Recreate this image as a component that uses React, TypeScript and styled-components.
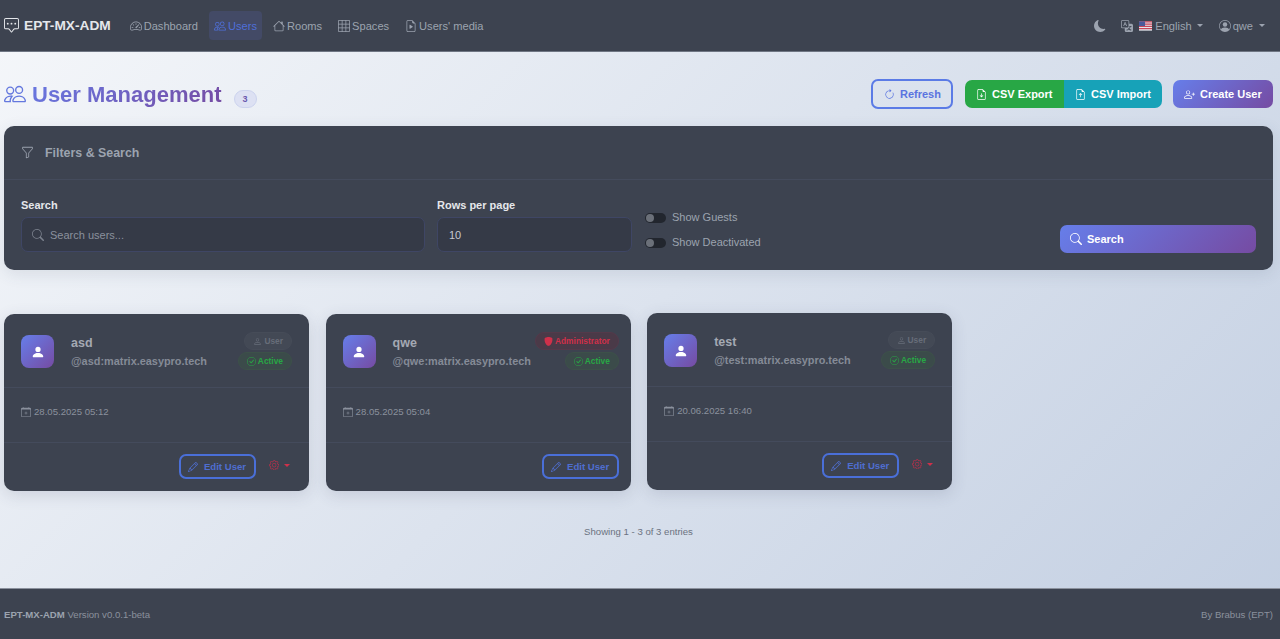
import { ReactNode } from "react";
import styled, { createGlobalStyle } from "styled-components";
import {
  BsArrowClockwise,
  BsCalendarPlus,
  BsCheckCircle,
  BsChatSquareDots,
  BsFileEarmarkArrowDown,
  BsFileEarmarkArrowUp,
  BsFileEarmarkPlay,
  BsFunnel,
  BsGear,
  BsGrid3X3,
  BsHouse,
  BsMoonFill,
  BsPencil,
  BsPeople,
  BsPerson,
  BsPersonCircle,
  BsPersonFill,
  BsPersonPlus,
  BsSearch,
  BsShieldFill,
  BsSpeedometer2,
  BsTranslate,
} from "react-icons/bs";

const GlobalStyle = createGlobalStyle`
  * { box-sizing: border-box; }
  html, body { margin: 0; padding: 0; height: 100%; }
  body {
    font-family: "Liberation Sans", Arial, sans-serif;
    background: linear-gradient(135deg, #f5f7fa 0%, #c3cfe2 100%);
    color: #9ca3af;
  }
`;

const Page = styled.div`
  height: 639px;
  display: flex;
  flex-direction: column;
  overflow: hidden;
`;

const Navbar = styled.nav`
  height: 52px;
  flex: none;
  background: #3d4350;
  border-bottom: 1px solid #6f7683;
  display: flex;
  align-items: center;
  padding: 0 15px 0 4px;
`;

const Brand = styled.div`
  display: flex;
  align-items: center;
  gap: 5px;
  font-size: 13.7px;
  font-weight: 700;
  color: #e5e7eb;
  margin-right: 14px;
  svg { font-size: 15px; }
`;

const NavItem = styled.div<{ $active?: boolean }>`
  height: 29px;
  display: flex;
  align-items: center;
  gap: 2px;
  padding: 0 5px;
  margin-right: 6px;
  font-size: 11.1px;
  border-radius: 4px;
  color: ${(p) => (p.$active ? "#4f6fd8" : "#9ca3af")};
  background: ${(p) => (p.$active ? "#434a66" : "transparent")};
  svg { font-size: 12px; }
`;

const NavRight = styled.div`
  margin-left: auto;
  display: flex;
  align-items: center;
  font-size: 11.1px;
  color: #9ca3af;
`;

const NavIconButton = styled.div<{ $margin?: number; $inner?: number }>`
  display: flex;
  align-items: center;
  gap: ${(p) => p.$inner ?? 4}px;
  margin-left: ${(p) => p.$margin ?? 0}px;
  svg { font-size: 12px; }
`;

const Caret = styled.span<{ $color?: string; $left?: number }>`
  display: inline-block;
  margin-left: ${(p) => p.$left ?? 1}px;
  border-top: 3.5px solid ${(p) => p.$color ?? "currentColor"};
  border-left: 3.5px solid transparent;
  border-right: 3.5px solid transparent;
`;

const FlagIcon = styled.svg`
  margin: 0 -1px 0 2px;
`;

const Main = styled.main`
  flex: 1;
  padding: 27px 7px 0 4px;
  display: flex;
  flex-direction: column;
`;

const HeaderRow = styled.div`
  height: 30px;
  display: flex;
  align-items: center;
  justify-content: space-between;
  margin-bottom: 17px;
`;

const TitleGroup = styled.div`
  display: flex;
  align-items: center;
`;

const Title = styled.h1`
  margin: 0;
  display: flex;
  align-items: center;
  gap: 6px;
  font-size: 22px;
  line-height: 29px;
  font-weight: 700;
  background: linear-gradient(135deg, #667eea 0%, #764ba2 100%);
  -webkit-background-clip: text;
  background-clip: text;
  color: transparent;
  svg { font-size: 22px; color: #6478de; }
`;

const CountBadge = styled.span`
  margin: 9px 0 0 12px;
  width: 23px;
  height: 18px;
  border-radius: 9px;
  background: #dde1f3;
  border: 1px solid #ccd3ee;
  color: #6a58ae;
  font-size: 9px;
  font-weight: 700;
  display: flex;
  align-items: center;
  justify-content: center;
`;

const Actions = styled.div`
  display: flex;
  align-items: center;
  gap: 11px;
`;

const ActionButton = styled.button`
  height: 28px;
  border: 0;
  border-radius: 7px;
  color: #fff;
  font: 700 11px "Liberation Sans", Arial, sans-serif;
  white-space: nowrap;
  display: flex;
  align-items: center;
  gap: 5px;
  padding: 0 0 0 11px;
  svg { font-size: 11px; flex: none; }
`;

const RefreshButton = styled(ActionButton)`
  height: 30px;
  width: 82px;
  background: transparent;
  border: 2px solid #5b7be6;
  color: #5a74e0;
`;

const CsvGroup = styled.div`
  display: flex;
  margin-left: 1px;
`;

const CsvExport = styled(ActionButton)`
  background: #28a745;
  border-radius: 7px 0 0 7px;
  width: 99px;
`;

const CsvImport = styled(ActionButton)`
  background: #17a2b8;
  border-radius: 0 7px 7px 0;
  width: 98px;
`;

const CreateButton = styled(ActionButton)`
  background: linear-gradient(135deg, #667eea 0%, #764ba2 100%);
  width: 100px;
`;

const Panel = styled.section`
  background: #3d4350;
  border-radius: 10px;
  box-shadow: 0 4px 16px rgba(60, 70, 100, 0.12);
  margin-bottom: 44px;
`;

const PanelHeader = styled.div`
  height: 54px;
  border-bottom: 1px solid #444b5c;
  display: flex;
  align-items: center;
  gap: 11px;
  padding: 0 17px;
  font-size: 12.4px;
  font-weight: 700;
  color: #9ca3af;
  svg { font-size: 13px; }
`;

const PanelBody = styled.div`
  height: 90px;
  display: flex;
  padding: 19px 17px 0;
`;

const Field = styled.div<{ $width: number }>`
  width: ${(p) => p.$width}px;
  margin-right: 12px;
`;

const FieldLabel = styled.div`
  font-size: 11px;
  font-weight: 700;
  color: #e5e7eb;
  line-height: 13px;
  margin-bottom: 5px;
`;

const InputBox = styled.div`
  height: 35px;
  border-radius: 7px;
  background: #353a47;
  border: 1px solid #3f4665;
  display: flex;
  align-items: center;
  gap: 6px;
  padding: 0 10px;
  font-size: 11px;
  color: #8b919d;
  svg { font-size: 12px; color: #7b818d; }
`;

const ValueBox = styled(InputBox)`
  padding: 0 11px;
  color: #c5c9d1;
`;

const SwitchColumn = styled.div`
  display: flex;
  flex-direction: column;
  gap: 12px;
  padding: 12px 0 0 1px;
`;

const SwitchRow = styled.div`
  display: flex;
  align-items: center;
  gap: 6px;
  font-size: 11px;
  line-height: 13px;
  color: #9ca3af;
`;

const SwitchTrack = styled.span`
  width: 21px;
  height: 10px;
  border-radius: 5px;
  background: #22262e;
  display: flex;
  align-items: center;
  padding-left: 1px;
  &::before {
    content: "";
    width: 8px;
    height: 8px;
    border-radius: 50%;
    background: #6b7079;
  }
`;

const SearchButton = styled(ActionButton)`
  margin: 26px 0 0 auto;
  width: 196px;
  background: linear-gradient(135deg, #667eea 0%, #764ba2 100%);
  padding-left: 10px;
  svg { font-size: 12px; }
`;

const CardGrid = styled.div`
  display: grid;
  grid-template-columns: repeat(4, 305px);
  gap: 16.6px;
`;

const Card = styled.article<{ $lifted?: boolean }>`
  height: 177px;
  background: #3d4350;
  border-radius: 10px;
  box-shadow: 0 4px 16px rgba(60, 70, 100, 0.16);
  transform: translateY(${(p) => (p.$lifted ? "-1px" : "0")});
  display: flex;
  flex-direction: column;
`;

const CardHead = styled.div`
  height: 74px;
  border-bottom: 1px solid #444b5c;
  display: flex;
  align-items: flex-start;
  padding: 17px 17px 0;
`;

const Avatar = styled.div`
  width: 33px;
  height: 33px;
  flex: none;
  margin: 4px 17px 0 0;
  border-radius: 8px;
  background: linear-gradient(135deg, #667eea 0%, #764ba2 100%);
  color: #fff;
  display: flex;
  align-items: center;
  justify-content: center;
  svg { font-size: 14px; }
`;

const UserInfo = styled.div`
  flex: 1 0 auto;
  padding-top: 5px;
`;

const UserName = styled.div`
  font-size: 12.5px;
  font-weight: 700;
  line-height: 15px;
  color: #a4a9b3;
  margin-bottom: 3px;
`;

const MatrixId = styled.div`
  font-size: 10.9px;
  font-weight: 700;
  line-height: 15px;
  color: #858b97;
  white-space: nowrap;
`;

const Badges = styled.div`
  flex: none;
  display: flex;
  flex-direction: column;
  align-items: flex-end;
  gap: 2px;
  padding-top: 1px;
  margin-left: 4px;
`;

const Badge = styled.span<{ $tone: "user" | "admin" | "active" }>`
  height: 18px;
  border-radius: 9px;
  display: flex;
  align-items: center;
  gap: 2px;
  padding: 0 8px;
  font-size: 8.4px;
  font-weight: 700;
  color: ${(p) =>
    p.$tone === "admin" ? "#d0304a" : p.$tone === "active" ? "#28a745" : "#676d79"};
  background: ${(p) =>
    p.$tone === "admin" ? "#4a3a48" : p.$tone === "active" ? "#3b4b4a" : "#434955"};
  border: 1px solid
    ${(p) =>
      p.$tone === "admin" ? "#54394a" : p.$tone === "active" ? "#3c5149" : "#464c58"};
  svg { font-size: 9px; }
`;

const CardBody = styled.div`
  height: 55px;
  border-bottom: 1px solid #444b5c;
  display: flex;
  align-items: center;
  gap: 3px;
  padding: 0 17px 7px;
  font-size: 9.6px;
  color: #8b919d;
  svg { font-size: 10px; }
`;

const CardFooter = styled.div`
  flex: 1;
  display: flex;
  align-items: center;
  justify-content: flex-end;
  padding: 0 12px 1px 17px;
`;

const EditButton = styled.button`
  width: 77px;
  height: 25px;
  border-radius: 7px;
  border: 2px solid #4a6fd8;
  background: transparent;
  color: #4f6ed0;
  font: 700 9.6px "Liberation Sans", Arial, sans-serif;
  display: flex;
  align-items: center;
  justify-content: center;
  gap: 6px;
  svg { font-size: 10px; }
`;

const GearMenu = styled.div`
  display: flex;
  align-items: center;
  margin-left: 13px;
  padding: 0 7px 3px 0;
  color: #b8304a;
  svg { font-size: 10.5px; }
`;

const Entries = styled.div`
  margin-top: 35px;
  text-align: center;
  font-size: 9.6px;
  color: #6b7280;
`;

const Footer = styled.footer`
  height: 51px;
  flex: none;
  background: #3d4350;
  border-top: 1px solid #8b919d;
  display: flex;
  align-items: center;
  justify-content: space-between;
  padding: 0 7px 0 4px;
  font-size: 9.6px;
  color: #8b919d;
  b { color: #9ca3af; }
`;

const Flag = () => (
  <FlagIcon width="13" height="10" viewBox="0 0 14 10" aria-hidden="true">
    <rect width="14" height="10" fill="#e4e6ec" />
    <path d="M0 0h14v1.2H0zM0 2.4h14v1.2H0zM0 4.8h14V6H0zM0 7.2h14v1.2H0z" fill="#c8475a" />
    <rect width="6.5" height="5" fill="#4a5a9a" />
  </FlagIcon>
);

type UserCard = {
  name: string;
  id: string;
  date: string;
  admin?: boolean;
  lifted?: boolean;
};

const users: UserCard[] = [
  { name: "asd", id: "@asd:matrix.easypro.tech", date: "28.05.2025 05:12" },
  { name: "qwe", id: "@qwe:matrix.easypro.tech", date: "28.05.2025 05:04", admin: true },
  { name: "test", id: "@test:matrix.easypro.tech", date: "20.06.2025 16:40", lifted: true },
];

const navLinks: { label: string; icon: ReactNode; active?: boolean }[] = [
  { label: "Dashboard", icon: <BsSpeedometer2 /> },
  { label: "Users", icon: <BsPeople />, active: true },
  { label: "Rooms", icon: <BsHouse /> },
  { label: "Spaces", icon: <BsGrid3X3 /> },
  { label: "Users' media", icon: <BsFileEarmarkPlay /> },
];

function App() {
  return (
    <Page>
      <GlobalStyle />
      <Navbar>
        <Brand>
          <BsChatSquareDots />
          EPT-MX-ADM
        </Brand>
        {navLinks.map((link) => (
          <NavItem key={link.label} $active={link.active}>
            {link.icon}
            {link.label}
          </NavItem>
        ))}
        <NavRight>
          <NavIconButton>
            <BsMoonFill />
          </NavIconButton>
          <NavIconButton $margin={15} $inner={4}>
            <BsTranslate />
            <Flag />
            English
            <Caret />
          </NavIconButton>
          <NavIconButton $margin={16} $inner={2}>
            <BsPersonCircle />
            qwe
            <Caret $left={4} />
          </NavIconButton>
        </NavRight>
      </Navbar>

      <Main>
        <HeaderRow>
          <TitleGroup>
            <Title>
              <BsPeople />
              User Management
            </Title>
            <CountBadge>3</CountBadge>
          </TitleGroup>
          <Actions>
            <RefreshButton>
              <BsArrowClockwise />
              Refresh
            </RefreshButton>
            <CsvGroup>
              <CsvExport>
                <BsFileEarmarkArrowDown />
                CSV Export
              </CsvExport>
              <CsvImport>
                <BsFileEarmarkArrowUp />
                CSV Import
              </CsvImport>
            </CsvGroup>
            <CreateButton>
              <BsPersonPlus />
              Create User
            </CreateButton>
          </Actions>
        </HeaderRow>

        <Panel>
          <PanelHeader>
            <BsFunnel />
            Filters &amp; Search
          </PanelHeader>
          <PanelBody>
            <Field $width={404}>
              <FieldLabel>Search</FieldLabel>
              <InputBox>
                <BsSearch />
                Search users...
              </InputBox>
            </Field>
            <Field $width={195}>
              <FieldLabel>Rows per page</FieldLabel>
              <ValueBox>10</ValueBox>
            </Field>
            <SwitchColumn>
              <SwitchRow>
                <SwitchTrack />
                Show Guests
              </SwitchRow>
              <SwitchRow>
                <SwitchTrack />
                Show Deactivated
              </SwitchRow>
            </SwitchColumn>
            <SearchButton>
              <BsSearch />
              Search
            </SearchButton>
          </PanelBody>
        </Panel>

        <CardGrid>
          {users.map((user) => (
            <Card key={user.name} $lifted={user.lifted}>
              <CardHead>
                <Avatar>
                  <BsPersonFill />
                </Avatar>
                <UserInfo>
                  <UserName>{user.name}</UserName>
                  <MatrixId>{user.id}</MatrixId>
                </UserInfo>
                <Badges>
                  {user.admin ? (
                    <Badge $tone="admin">
                      <BsShieldFill />
                      Administrator
                    </Badge>
                  ) : (
                    <Badge $tone="user">
                      <BsPerson />
                      User
                    </Badge>
                  )}
                  <Badge $tone="active">
                    <BsCheckCircle />
                    Active
                  </Badge>
                </Badges>
              </CardHead>
              <CardBody>
                <BsCalendarPlus />
                {user.date}
              </CardBody>
              <CardFooter>
                <EditButton>
                  <BsPencil />
                  Edit User
                </EditButton>
                {!user.admin && (
                  <GearMenu>
                    <BsGear />
                    <Caret $color="#d0304a" $left={5} />
                  </GearMenu>
                )}
              </CardFooter>
            </Card>
          ))}
        </CardGrid>

        <Entries>Showing 1 - 3 of 3 entries</Entries>
      </Main>

      <Footer>
        <span>
          <b>EPT-MX-ADM</b> Version v0.0.1-beta
        </span>
        <span>By Brabus (EPT)</span>
      </Footer>
    </Page>
  );
}

export default App;
